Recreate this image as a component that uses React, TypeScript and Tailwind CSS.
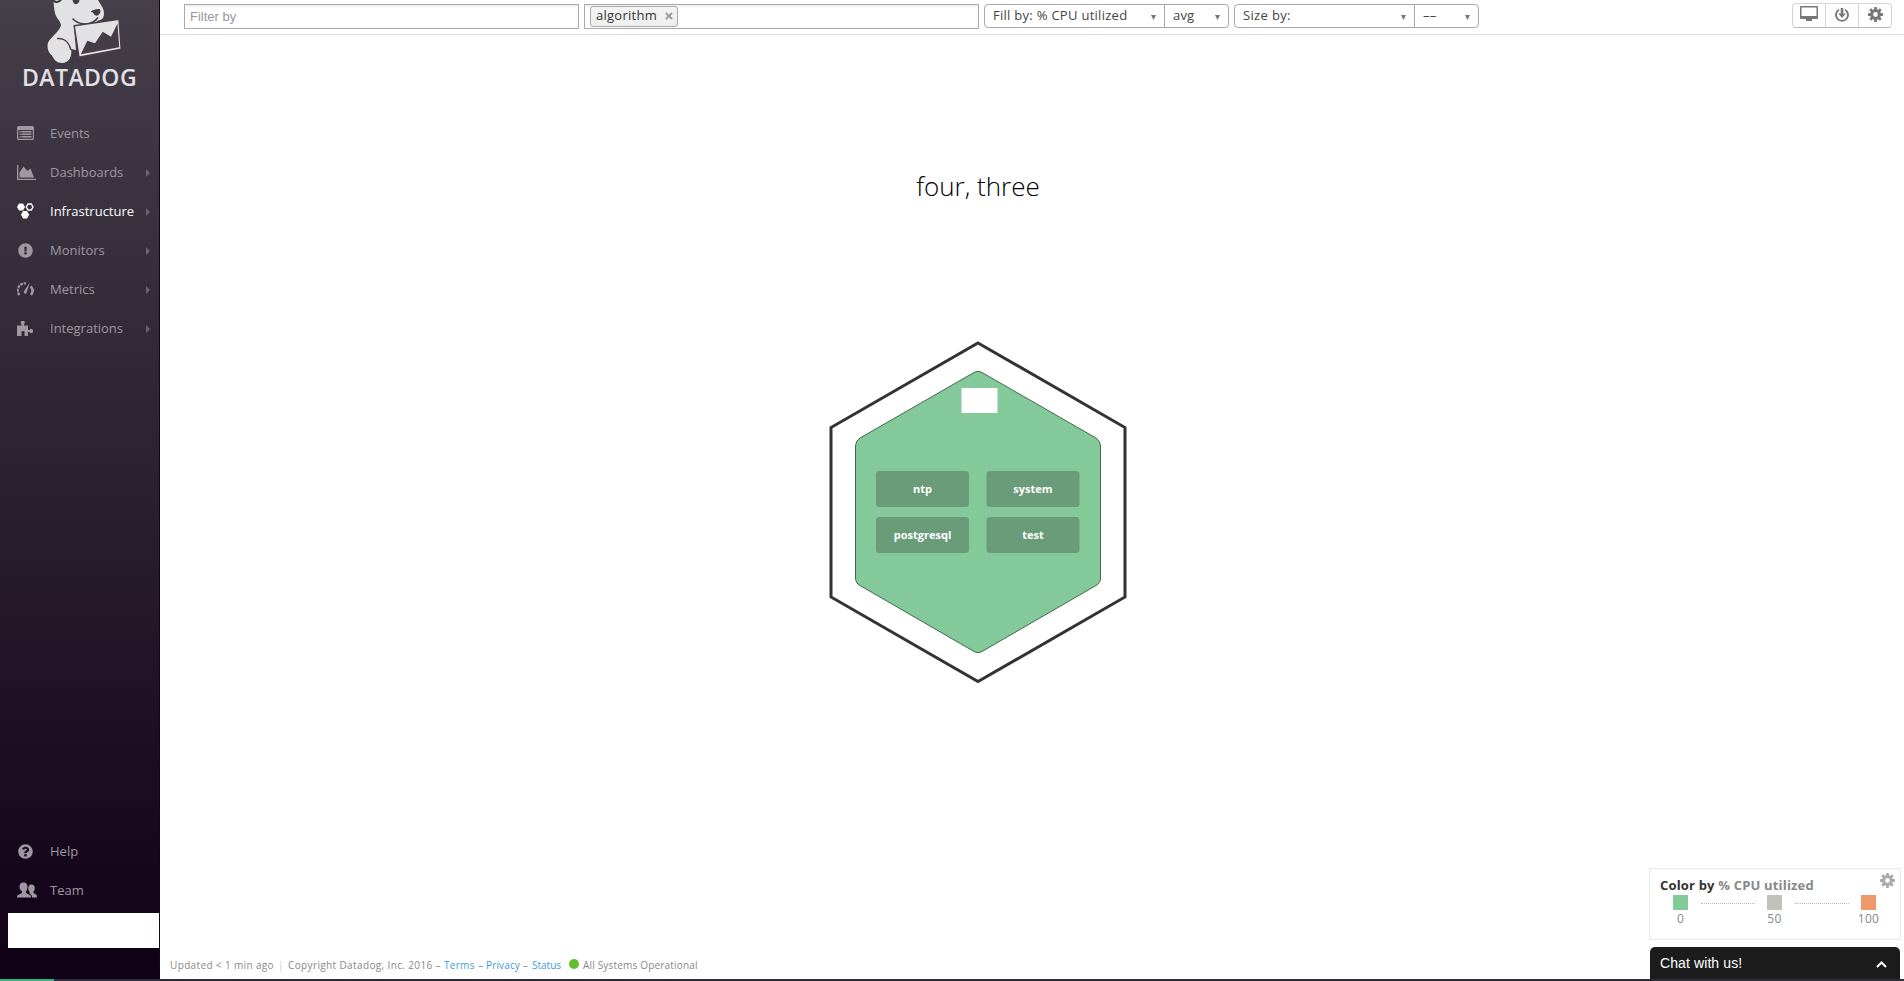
import React from "react";
import { FaChartArea, FaCog, FaExclamationCircle, FaQuestionCircle } from "react-icons/fa";

const SANS = "font-['Open_Sans','Noto_Sans',sans-serif]";

function DogLogo() {
  return (
    <svg width="80" height="66" viewBox="0 0 80 66" fill="#e2e1e4">
      <path d="M7.300 0 H52 C54 4 58 8 58 13 C58 18 56 20 52 20.500 C49 24 45 26 42 25.500 L28 28 L30 50 L25 49 C26.500 56 23 63 16 63 C11 63 8 60 6 55.500 C1 52 1 45 2.300 42 C6 36 14 31 15 25 C14 20 10 18 9 13 C8 8 8 6 7.300 0 Z" />
      <path d="M6 0.500 C8 3.500 12 4.500 16 0 L13 0 C11.500 1.500 9.500 1 8.500 0 L6 0 Z" fill="#443d48" />
      <path d="M26.500 0 C27 3 28.500 4.200 30 4.200 C32 4.200 33.500 2 33.500 0Z" fill="#443d48" />
      <path d="M44.800 11.500 C47 9.800 51 8.700 54 9.200 C54.800 11 54.500 13 53 14.500 C51 16.200 49 16 48.200 14.500 C47.700 13 46.500 12.400 44.800 11.500Z" fill="#443d48" />
      <path d="M26.500 18.500 C32 24.500 41 25.500 47 22 C50 20.500 51 19 52 17.500" fill="none" stroke="#443d48" strokeWidth="1.500" />
      <path d="M11 38.700 C18 37.500 23 42 25 50" fill="none" stroke="#443d48" strokeWidth="1.300" />
      <path d="M28.200 25.800 L73 19.200 L75.200 49.300 L33 57.300 Z" stroke="#443d48" strokeWidth="1.400" />
      <path d="M34.800 54.200 L41.300 40.700 L49 43.300 L56.700 31.700 L65 36.700 L71.500 23.500 L73.200 47.200 Z" fill="#443d48" />
    </svg>
  );
}

function EventsIcon() {
  return (
    <svg width="17" height="14" viewBox="0 0 17 14">
      <path fill="currentColor" fillRule="evenodd" d="M1.500 0h14A1.500 1.500 0 0 1 17 1.500v11A1.500 1.500 0 0 1 15.500 14h-14A1.500 1.500 0 0 1 0 12.500v-11A1.500 1.500 0 0 1 1.500 0ZM1.200 4v8.800h14.600V4Z" />
      <path stroke="currentColor" strokeWidth="1.500" d="M2.500 5.700h1.300M4.500 5.700h10M2.500 8.200h1.300M4.500 8.200h10M2.500 10.700h1.300M4.500 10.700h10" />
    </svg>
  );
}

function AreaIcon() {
  return (
    <svg width="19" height="15" viewBox="0 0 19 15" fill="currentColor">
      <path d="M0 0h1.300v13.700H19V15H0Z" />
      <path d="M2.500 12.500V7.500L6.500 1.500l4 4.500 3-2.500 3.500 9Z" />
    </svg>
  );
}

function ClusterIcon() {
  return (
    <svg width="17" height="16" viewBox="0 0 17 16" fill="currentColor">
      <path d="M2 0.500h4l2 3.500-2 3.500H2L0 4Z" />
      <path d="M6 8h4l2.200 3.800-2.200 3.700H6l-2-3.700Z" />
      <path d="M11 1h3.200l1.800 3-1.800 3H11L9.300 4Z" fill="none" stroke="currentColor" strokeWidth="1.400" />
    </svg>
  );
}

function MetricsIcon() {
  return (
    <svg width="17" height="14" viewBox="0 0 17 14" fill="none" stroke="currentColor">
      <path d="M2.500 13A7 7 0 0 1 9 1.500" strokeWidth="2.200" strokeDasharray="2.800 0.900" />
      <path d="M13.500 4.500C16.300 7 15.800 10.500 14 13" strokeWidth="2.600" />
      <path d="M12.800 0.500L9.500 11C8.500 12.500 6.300 11.500 6.800 9.600Z" fill="currentColor" stroke="none" />
    </svg>
  );
}

function PuzzleIcon() {
  return (
    <svg width="16" height="15" viewBox="0 0 16 15" fill="currentColor">
      <path d="M0 4.500h4.500V3A2 2 0 1 1 7 3v1.500h4V9h1.500a2 2 0 1 1 0 2H11v4H7.500v-2.500a1.700 1.700 0 1 0-3 0V15H0Z" />
    </svg>
  );
}

function TeamIcon() {
  return (
    <svg width="20" height="16" viewBox="0 0 20 16" fill="currentColor">
      <path d="M6.500 0.500c3 0 4 2 4 4.500 0 2-.8 3.500-1.500 4.500v1.500l4 2c.8.500 1 1.500 1 2.500H0c0-1 .2-2 1-2.500l4-2V9.500C4 8.500 2.500 7 2.500 5c0-2.500 1-4.500 4-4.500Z" />
      <path d="M14.500 2.500c2.300 0 3.300 1.600 3.300 3.700 0 1.600-.6 2.600-1.300 3.400V11l2.500 1.500c.8.500 1 1.500 1 3h-5c0-2-.5-3-2.500-4V9.500c-.8-.8-1.200-1.700-1.200-3.300 0-2.100.9-3.700 3.200-3.700Z" />
    </svg>
  );
}

function MonitorIcon() {
  return (
    <svg width="18" height="16" viewBox="0 0 18 16">
      <path fill="currentColor" fillRule="evenodd" d="M1 0h16a1 1 0 0 1 1 1v11a1 1 0 0 1-1 1h-5v2H6v-2H1a1 1 0 0 1-1-1V1a1 1 0 0 1 1-1Zm.500 1.500v8.500h15V1.500Z" />
    </svg>
  );
}

function DownloadIcon() {
  return (
    <svg width="14" height="14" viewBox="0 0 14 14" fill="none" stroke="currentColor">
      <path d="M4 1.700A6 6 0 1 0 10 1.700" strokeWidth="1.900" />
      <path d="M5.700 0h2.600v5.500h2.500L7 10 3.200 5.500h2.500Z" fill="currentColor" stroke="none" />
    </svg>
  );
}

const teeth = [0, 45, 90, 135, 180, 225, 270, 315];

function GearIcon({ className = "" }: { className?: string }) {
  return (
    <svg width="15" height="15" viewBox="0 0 15 15" className={className}>
      {teeth.map((a) => (
        <rect key={a} x="6.100" y="0" width="2.800" height="4" rx="0.400" fill="currentColor" transform={`rotate(${a} 7.500 7.500)`} />
      ))}
      <circle cx="7.500" cy="7.500" r="3.900" fill="none" stroke="currentColor" strokeWidth="3" />
    </svg>
  );
}

const navItems = [
  { label: "Events", icon: <EventsIcon />, arrow: false, active: false },
  { label: "Dashboards", icon: <AreaIcon />, arrow: true, active: false },
  { label: "Infrastructure", icon: <ClusterIcon />, arrow: true, active: true },
  { label: "Monitors", icon: <FaExclamationCircle size={15} className="ml-px" />, arrow: true, active: false },
  { label: "Metrics", icon: <MetricsIcon />, arrow: true, active: false },
  { label: "Integrations", icon: <PuzzleIcon />, arrow: true, active: false },
];

function NavRow({ label, icon, arrow = false, active = false }: { label: string; icon: React.ReactNode; arrow?: boolean; active?: boolean }) {
  return (
    <a className={`flex h-[39px] items-center pl-[17px] pr-[9px] text-[13px] ${active ? "text-white" : "text-[#9d98a1]"}`}>
      <span className="w-[33px] shrink-0 pb-px">{icon}</span>
      <span className="flex-1 whitespace-nowrap">{label}</span>
      {arrow && (
        <svg width="4" height="8" viewBox="0 0 4 8" fill="#6b6570">
          <path d="M0 0l4 4-4 4Z" />
        </svg>
      )}
    </a>
  );
}

function Sidebar() {
  return (
    <aside className="flex w-[160px] shrink-0 flex-col border-r border-[#120617] bg-linear-to-b from-[#453f4a] via-[#2a202f] to-[#110216]">
      <div className="h-[66px] pl-[46px]"><DogLogo /></div>
      <div className="h-[48px] pl-[22px] font-['Open_Sans',sans-serif] text-[23px] font-semibold leading-[22px] tracking-[0.450px] text-[#e2e1e4]">DATADOG</div>
      <nav>
        {navItems.map((n) => <NavRow key={n.label} {...n} />)}
      </nav>
      <div className="mt-auto">
        <NavRow label="Help" icon={<FaQuestionCircle size={15} className="ml-px" />} />
        <NavRow label="Team" icon={<TeamIcon />} />
      </div>
      <div className="mb-[31px] ml-[8px] mt-[3px] h-[35px] bg-white" />
    </aside>
  );
}

function Caret() {
  return (
    <svg width="5" height="5" viewBox="0 0 6 6" className="mt-[2px]" fill="#777">
      <path d="M0 0h6L3 6Z" />
    </svg>
  );
}

function SelectPair({ first, second }: { first: React.ReactNode; second: string }) {
  return (
    <div className="flex h-[24px] w-[245px] rounded-[4px] border border-[#aaa] text-[13px] text-[#444]">
      <div className="flex w-[180px] items-center justify-between border-r border-[#aaa] pl-[8px] pr-[8px]">
        {first}<Caret />
      </div>
      <div className="flex flex-1 items-center justify-between pl-[8px] pr-[8px]">
        <span className="tracking-[0.200px]">{second}</span><Caret />
      </div>
    </div>
  );
}

function Toolbar() {
  return (
    <header className="flex h-[35px] shrink-0 items-start border-b border-[#ddd] pl-[24px] pr-[12px] pt-[4px]">
      <div className="flex h-[25px] w-[395px] items-center border border-[#aaa] bg-linear-to-b from-[#eee] to-white to-15% pl-[5px] font-['Liberation_Sans',Arial,sans-serif] text-[13px] text-[#999]">Filter by</div>
      <div className="ml-[5px] flex h-[25px] w-[395px] items-center border border-[#aaa] bg-linear-to-b from-[#eee] to-white to-15% pl-[5px]">
        <div className="flex h-[21px] w-[88px] items-center justify-between rounded-[3px] border border-[#aaa] bg-linear-to-b from-[#f4f4f4] to-[#eee] pl-[5px] pr-[4px] text-[13px] text-[#333]">
          <span className="pb-[2px] tracking-[0.270px]">algorithm</span>
          <svg width="8" height="8" viewBox="0 0 8 8" stroke="#999" strokeWidth="1.900" className="mb-[2px]"><path d="M.8.800l6.400 6.400M7.200.8L.8 7.200" /></svg>
        </div>
      </div>
      <div className="ml-[5px]"><SelectPair first={<span className="tracking-[0.280px]">Fill by: % CPU utilized</span>} second="avg" /></div>
      <div className="ml-[5px]"><SelectPair first={<span className="tracking-[0.350px]">Size by:</span>} second="––" /></div>
      <div className="-mt-px ml-auto flex h-[25px] w-[100px] rounded-[4px] border border-[#d5d5d5] border-b-[#bbb] text-[#777]">
        <div className="flex flex-1 justify-center border-r border-[#d5d5d5] pt-[2px]"><MonitorIcon /></div>
        <div className="flex flex-1 justify-center border-r border-[#d5d5d5] pt-[4px]"><DownloadIcon /></div>
        <div className="flex flex-1 justify-center pt-[3px]"><GearIcon /></div>
      </div>
    </header>
  );
}

const checks = [
  { name: "ntp", x: 47, y: 131 },
  { name: "system", x: 157.500, y: 131 },
  { name: "postgresql", x: 47, y: 177 },
  { name: "test", x: 157.500, y: 177 },
];

function HostHexagon() {
  return (
    <svg width="298" height="344" viewBox="0 0 298 344" className={SANS}>
      <path d="M149 3 L296 87.500 V257 L149 341.500 L2 257 V87.500 Z" fill="none" stroke="#333" strokeWidth="3" />
      <path d="M145 32.500 Q149 30 153 32.500 L267 98 Q271.500 101 271.500 106 V238 Q271.500 243 267 245.500 L153 311.500 Q149 314 145 311.500 L31 245.500 Q26.500 243 26.500 238 V106 Q26.500 101 31 98 Z" fill="#84c999" stroke="#47664f" strokeWidth="1" />
      <rect x="132.500" y="48" width="36" height="25" fill="#fff" />
      {checks.map((c) => (
        <g key={c.name}>
          <rect x={c.x} y={c.y} width="93" height="36" rx="3.500" fill="#6a9c79" />
          <text x={c.x + 46.500} y={c.y + 22} textAnchor="middle" fontSize="11" fontWeight="700" fill="#fff">{c.name}</text>
        </g>
      ))}
    </svg>
  );
}

function Footer() {
  return (
    <footer className="flex h-[16px] items-center pl-[10px] text-[10px] whitespace-nowrap text-[#888]">
      <span className="w-[108px] tracking-[0.360px]">Updated &lt; 1 min ago</span>
      <span className="w-[10px] text-[#ccc]">|</span>
      <span className="w-[156px] tracking-[0.370px]">Copyright Datadog, Inc. 2016 –</span>
      <span className="w-[42px]"><a className="text-[#3c9dd8] tracking-[0.300px]">Terms</a> <span className="ml-px">–</span></span>
      <span className="w-[46px]"><a className="text-[#3c9dd8] tracking-[0.150px]">Privacy</a> –</span>
      <a className="w-[37px] text-[#3c9dd8]">Status</a>
      <span className="mb-[3px] mr-[4px] size-[10px] rounded-full bg-[#62bd2f]" />
      <span className="tracking-[0.180px]">All Systems Operational</span>
    </footer>
  );
}

function LegendStop({ color, value }: { color: string; value: string }) {
  return (
    <div className="flex w-[27px] flex-col items-center">
      <div className={`size-[15px] ${color}`} />
      <span className="text-[12px] leading-[17px] tracking-[0.300px] text-[#888]">{value}</span>
    </div>
  );
}

function Legend() {
  return (
    <div className="relative h-[72px] w-[252px] rounded-[2px] border border-[#e6e6e6] bg-white pt-[7px]">
      <div className="h-[19px] pl-[10px] text-[13px] font-bold leading-[18px] tracking-[0.180px] text-[#333]">Color by <span className="text-[#888]">% CPU utilized</span></div>
      <GearIcon className="absolute right-[5px] top-[4px] text-[#aaa]" />
      <div className="flex pl-[17px]">
        <LegendStop color="bg-[#84c999]" value="0" />
        <div className="mx-[6.500px] mt-[8px] h-px w-[54px] border-t border-dotted border-[#bbb]" />
        <LegendStop color="bg-[#c3c2b9]" value="50" />
        <div className="mx-[6.500px] mt-[8px] h-px w-[54px] border-t border-dotted border-[#bbb]" />
        <LegendStop color="bg-[#f0986d]" value="100" />
      </div>
    </div>
  );
}

export default function App() {
  return (
    <div className="flex h-[981px] w-[1904px] flex-col overflow-hidden bg-white font-['Open_Sans','Noto_Sans',sans-serif]">
      <div className="flex min-h-0 flex-1">
        <Sidebar />
        <main className="flex flex-1 flex-col">
          <Toolbar />
          <section className="flex w-[1636px] flex-1 flex-col items-center pt-[133px]">
            <h1 className="h-[172px] text-[26px] font-light leading-[36px] text-black">four, three</h1>
            <HostHexagon />
          </section>
          <div className="pb-[6px]"><Footer /></div>
        </main>
      </div>
      <div className="absolute left-[1649px] top-[868px]">
        <Legend />
        <div className="ml-px mt-[7px] flex h-[32px] w-[250px] items-center justify-between rounded-t-[5px] bg-[#1c1c1c] pl-[10px] pr-[13px] font-['Liberation_Sans',Arial,sans-serif] text-[14px] text-white">
          <span className="pt-px tracking-[0.100px]">Chat with us!</span>
          <svg width="11" height="7" viewBox="0 0 11 7" fill="none" stroke="#fff" strokeWidth="2" className="mt-[2px]"><path d="M1 6l4.500-4.500L10 6" /></svg>
        </div>
      </div>
      <div className="h-[2px] shrink-0 bg-[#2b2d3b]"><div className="h-full w-[54px] bg-[#36b37e]" /></div>
    </div>
  );
}
